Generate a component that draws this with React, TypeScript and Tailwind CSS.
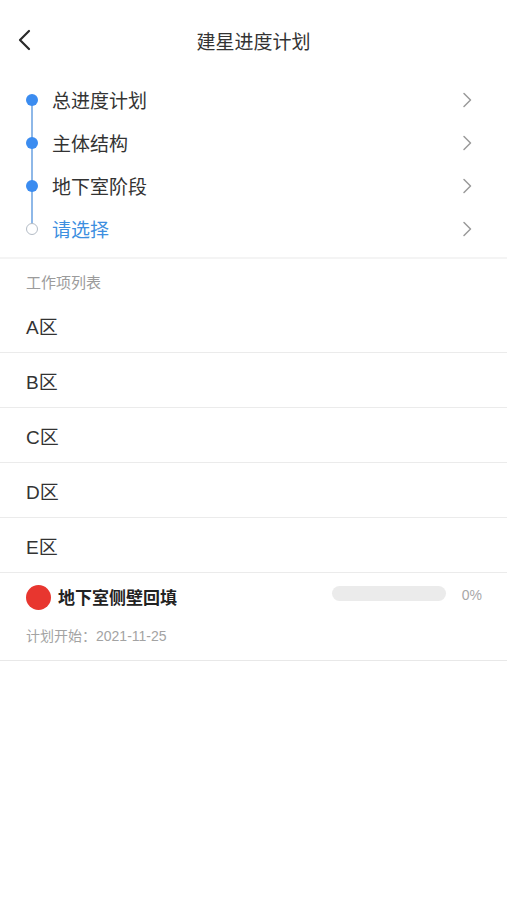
import React from "react";

const font = { fontFamily: '"Liberation Sans", "Noto Sans CJK SC", sans-serif' };

function ChevronRight() {
  return (
    <svg width="11" height="16" viewBox="0 0 11 16" fill="none">
      <path d="M2 1.5 L8.5 8 L2 14.5" stroke="#9a9a9a" strokeWidth="1.5" strokeLinecap="round" strokeLinejoin="round" />
    </svg>
  );
}

const steps = [
  { label: "总进度计划", done: true },
  { label: "主体结构", done: true },
  { label: "地下室阶段", done: true },
  { label: "请选择", done: false },
];

const zones = ["A区", "B区", "C区", "D区", "E区"];

export default function App() {
  return (
    <div className="w-[507px] h-[900px] bg-white flex flex-col" style={font}>
      {/* Header */}
      <div className="h-[78px] pt-[7px] flex items-center relative shrink-0">
        <div className="absolute left-[16px] top-[29px]">
          <svg width="18" height="22" viewBox="0 0 18 22" fill="none">
            <path d="M13 2 L4 11 L13 20" stroke="#2a2a2a" strokeWidth="2.2" strokeLinecap="round" strokeLinejoin="round" />
          </svg>
        </div>
        <div className="flex-1 text-center text-[19px] text-[#333333] leading-none">建星进度计划</div>
      </div>

      {/* Steps */}
      <div className="pb-[7px] flex flex-col shrink-0">
        {steps.map((s, i) => (
          <div key={i} className="h-[43px] flex items-center pl-[26px] pr-[34px]">
            <div className="w-[12px] h-[43px] relative flex items-center justify-center mr-[14px]">
              {i > 0 && <div className="absolute left-[5px] top-0 h-[21px] w-[2px] bg-[#8eb8e8]" />}
              {i < steps.length - 1 && <div className="absolute left-[5px] bottom-0 h-[22px] w-[2px] bg-[#8eb8e8]" />}
              {s.done ? (
                <div className="relative w-[12px] h-[12px] rounded-full bg-[#3b8cf0]" />
              ) : (
                <div className="relative w-[12px] h-[12px] rounded-full bg-white border-[1.5px] border-[#b4bcc6]" />
              )}
            </div>
            <div className={`flex-1 pt-[3px] text-[19px] leading-none ${s.done ? "text-[#333333]" : "text-[#3d8fe0]"}`}>{s.label}</div>
            <ChevronRight />
          </div>
        ))}
      </div>

      <div className="h-[2px] bg-[#f4f4f4] shrink-0" />

      {/* List label */}
      <div className="h-[39px] pt-[13px] pl-[26px] text-[15px] leading-[22px] text-[#9b9b9b] shrink-0">工作项列表</div>

      {zones.map((z) => (
        <div key={z} className="h-[55px] pt-[5px] flex items-center pl-[26px] border-b border-[#ebebeb] text-[19px] leading-none text-[#333333] shrink-0">
          {z}
        </div>
      ))}

      {/* Task */}
      <div className="h-[88px] border-b border-[#e8e8e8] pt-[12px] pl-[26px] pr-[25px] flex flex-col shrink-0">
        <div className="flex items-center h-[25px]">
          <div className="w-[25px] h-[25px] rounded-full bg-[#e8362f]" />
          <div className="ml-[7px] pt-[2px] text-[17px] font-bold text-[#222222] leading-none">地下室侧壁回填</div>
          <div className="flex-1" />
          <div className="w-[114px] h-[15px] rounded-full bg-[#ebebeb] -mt-[9px]" />
          <div className="ml-[16px] text-[14px] text-[#a8a8a8] leading-none -mt-[5px]">0%</div>
        </div>
        <div className="mt-[19px] text-[14px] text-[#a3a3a3] leading-none">计划开始：2021-11-25</div>
      </div>
    </div>
  );
}
